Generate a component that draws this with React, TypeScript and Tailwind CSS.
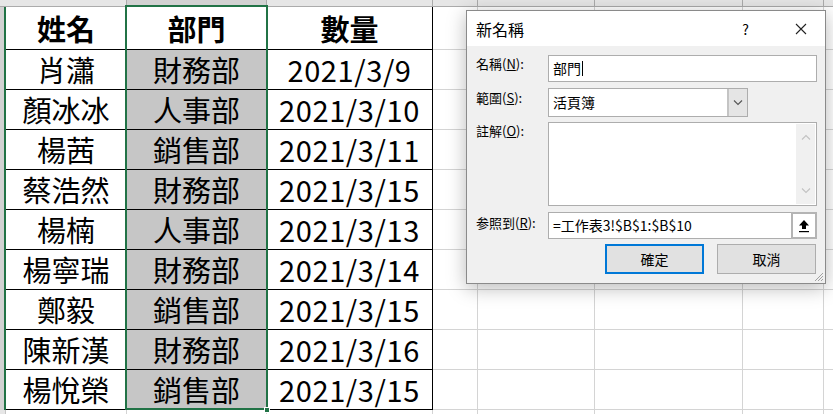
import React from 'react';

const COLS = [121, 140, 166, 45, 117, 148, 81, 80];

const ROWS: [string, string, string][] = [
  ['姓名', '部門', '數量'],
  ['肖瀟', '財務部', '2021/3/9'],
  ['顏冰冰', '人事部', '2021/3/10'],
  ['楊茜', '銷售部', '2021/3/11'],
  ['蔡浩然', '財務部', '2021/3/15'],
  ['楊楠', '人事部', '2021/3/13'],
  ['楊寧瑞', '財務部', '2021/3/14'],
  ['鄭毅', '銷售部', '2021/3/15'],
  ['陳新漢', '財務部', '2021/3/16'],
  ['楊悅榮', '銷售部', '2021/3/15'],
];

const font = { fontFamily: '"Noto Sans CJK TC", "Noto Sans", sans-serif' };

function Cell({ w, text, inTable, bold, fill, num }: { w: number; text?: string; inTable: boolean; bold?: boolean; fill?: boolean; num?: boolean }) {
  return (
    <div
      className={`shrink-0 h-full border-r border-b flex items-center justify-center leading-none text-[29px] text-black ${
        inTable ? 'border-black' : 'border-[#d4d4d4]'
      } ${bold ? 'font-bold' : ''} ${fill ? 'bg-[#c6c6c6]' : 'bg-white'} ${num ? 'tracking-[0.6px]' : ''}`}
      style={{ width: w }}
    >
      {text}
    </div>
  );
}

function SheetRow({ data, first, selected }: { data?: [string, string, string]; first?: boolean; selected: boolean }) {
  return (
    <div className={`flex ${first ? 'h-[43px]' : 'h-[40px]'}`}>
      <div
        className={`w-[6px] shrink-0 h-full ${
          selected ? 'bg-[#d2d2d2] border-r-2 border-[#217346]' : 'bg-[#e6e6e6] border-r border-[#c6c6c6]'
        }`}
      />
      {COLS.map((w, i) => (
        <Cell
          key={i}
          w={w}
          text={data && i < 3 ? data[i] : undefined}
          inTable={!!data && i < 3}
          bold={first}
          fill={!!data && !first && i === 1}
          num={!first && i === 2}
        />
      ))}
    </div>
  );
}

function Chevron({ up, className }: { up?: boolean; className?: string }) {
  return (
    <svg width="10" height="6" viewBox="0 0 10 6" className={className}>
      <path d={up ? 'M1 5.5 L5 1.5 L9 5.5' : 'M1 0.5 L5 4.5 L9 0.5'} fill="none" stroke="currentColor" strokeWidth="1.1" />
    </svg>
  );
}

function NewNameDialog() {
  return (
    <div
      className="absolute left-[466px] top-[10px] w-[360px] h-[274px] border border-[#8a8a8a] bg-[#f0f0f0] shadow-[0_4px_18px_rgba(0,0,0,0.28)] flex flex-col text-black"
      style={font}
    >
      <div className="h-[35px] bg-white flex items-center pl-[9px] pr-[18px] shrink-0">
        <span className="text-[16px] leading-none">新名稱</span>
        <span className="ml-auto text-[14px] leading-none mr-[46px]">?</span>
        <svg width="12" height="12" viewBox="0 0 12 12">
          <path d="M1 1 L11 11 M11 1 L1 11" stroke="#222" strokeWidth="1.1" />
        </svg>
      </div>

      <div className="flex-1 pl-[9px] pr-[8px] pt-[9px] flex flex-col gap-[6px] text-[13px]">
        <div className="flex items-start">
          <span className="w-[72px] leading-4 pt-[1px]">
            名稱(<u>N</u>):
          </span>
          <div className="w-[269px] h-[27px] bg-white border border-[#adadad] flex items-center pl-[4px] text-[14px]">
            部門<span className="w-px h-[15px] bg-black ml-[1px]" />
          </div>
        </div>

        <div className="flex items-start">
          <span className="w-[72px] leading-4 pt-[2px]">
            範圍(<u>S</u>):
          </span>
          <div className="w-[200px] h-[29px] bg-white border border-[#adadad] flex items-center">
            <span className="flex-1 pl-[4px] text-[14px]">活頁簿</span>
            <div className="w-[20px] h-full bg-[#e5e5e5] border-l-2 border-[#c4c4c4] flex items-center justify-center text-[#555]">
              <Chevron />
            </div>
          </div>
        </div>

        <div className="flex items-start -mt-px">
          <span className="w-[72px] leading-4 pt-[1px]">
            註解(<u>O</u>):
          </span>
          <div className="w-[269px] h-[84px] bg-white border border-[#adadad] flex justify-end p-px">
            <div className="w-[19px] h-full bg-[#f0f0f0] flex flex-col items-center justify-between py-[10px] text-[#c2c2c2]">
              <Chevron up />
              <Chevron />
            </div>
          </div>
        </div>

        <div className="flex items-start">
          <span className="w-[72px] leading-4 pt-[3px]">
            参照到(<u>R</u>):
          </span>
          <div className="w-[269px] h-[27px] bg-white border border-[#adadad] flex items-center">
            <span className="flex-1 pl-[4px] text-[14px]">=工作表3!$B$1:$B$10</span>
            <div className="w-[26px] h-[27px] -mr-px border-2 border-[#b4b4b4] bg-white flex items-center justify-center">
              <svg width="12" height="14" viewBox="0 0 12 14">
                <path d="M6 1 L11 6.5 L8 6.5 L8 10 L4 10 L4 6.5 L1 6.5 Z" fill="#000" />
                <rect x="1" y="12" width="10" height="1.2" fill="#000" />
              </svg>
            </div>
          </div>
        </div>

        <div className="flex justify-end gap-[13px] pr-[1px] -mt-px">
          <button className="w-[99px] h-[30px] bg-[#e1e1e1] border-2 border-[#0078d7] text-[14px] leading-none">確定</button>
          <button className="w-[99px] h-[30px] bg-[#e1e1e1] border border-[#adadad] text-[14px] leading-none">取消</button>
        </div>
      </div>

      <svg width="11" height="11" viewBox="0 0 11 11" className="absolute right-[1px] bottom-[1px]">
        <path d="M10 2 L2 10 M10 5 L5 10 M10 8 L8 10" stroke="#a0a0a0" strokeWidth="1" />
      </svg>
    </div>
  );
}

export default function App() {
  return (
    <div className="relative w-[833px] h-[414px] overflow-hidden bg-white" style={font}>
      <div className="flex h-[7px]">
        <div className="w-[6px] shrink-0 bg-[#e6e6e6] border-b border-[#ababab]" />
        {COLS.map((w, i) => (
          <div
            key={i}
            className={`shrink-0 h-full border-r border-b border-[#ababab] ${i === 1 ? 'bg-[#d2d2d2]' : 'bg-[#e6e6e6]'}`}
            style={{ width: w }}
          />
        ))}
      </div>

      {ROWS.map((r, i) => (
        <SheetRow key={i} data={r} first={i === 0} selected />
      ))}
      <SheetRow selected={false} />

      {/* selection border on B1:B10 */}
      <div className="absolute left-[125px] top-[5px] w-[143px] h-[405px] border-2 border-[#217346] pointer-events-none" />
      <div className="absolute left-[264px] top-[407px] w-[6px] h-[6px] bg-[#217346] border border-white" />

      <NewNameDialog />
    </div>
  );
}
